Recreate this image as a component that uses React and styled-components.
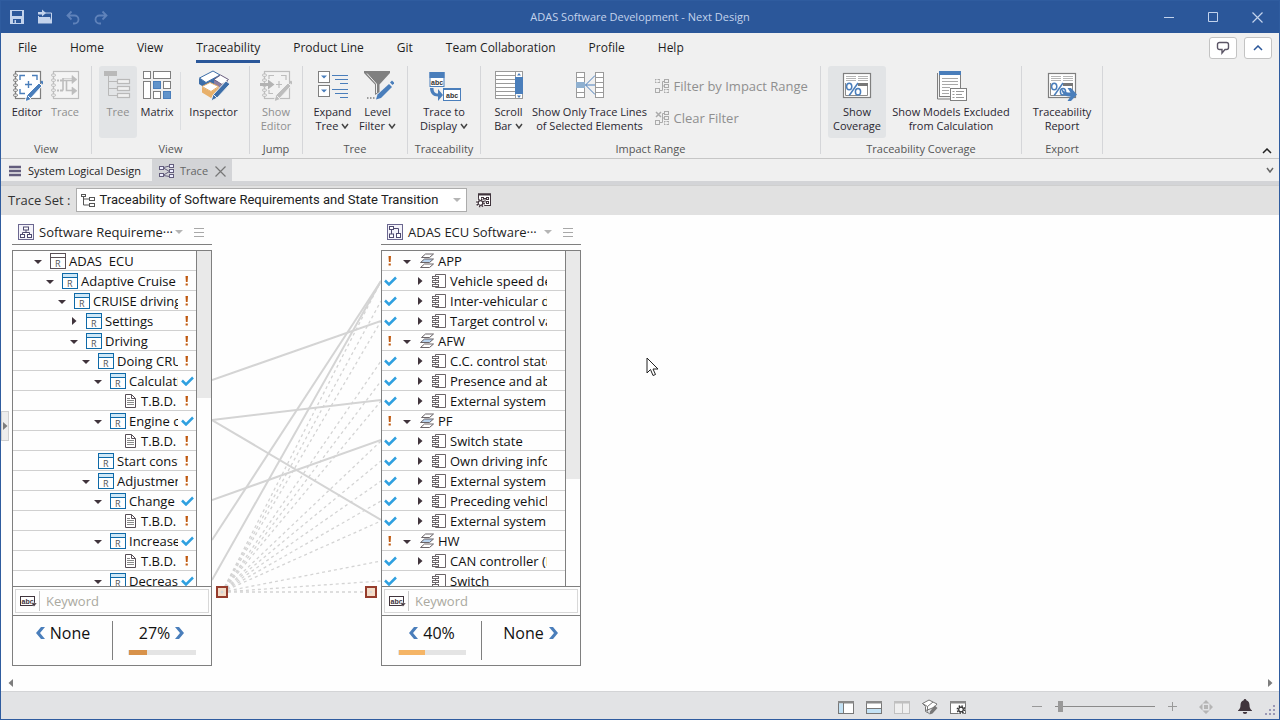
import React from "react";
import styled, { createGlobalStyle, css } from "styled-components";

const ui = '"Open Sans", "Noto Sans", sans-serif';
const blue = "#4a7ebb";
const grey = "#7f7f7f";
const pale = "#bdbdbd";

const GlobalStyle = createGlobalStyle`
  *, *::before, *::after { box-sizing: border-box; }
  body { margin: 0; font-family: ${ui}; font-size: 13px; color: #1e1e1e; }
  button, input, select { font: inherit; color: inherit; margin: 0; padding: 0; border: 0; background: none; border-radius: 0; }
  svg { display: block; flex: none; }
`;

/* ---------- window frame ---------- */

const Window = styled.div`
  display: flex;
  flex-direction: column;
  height: 100vh;
  min-height: 560px;
  border: 1px solid #2f5c9f;
  background: #fff;
  overflow: hidden;
  position: relative;
`;

const TitleBar = styled.header`
  display: grid;
  grid-template-columns: 1fr auto 1fr;
  align-items: center;
  height: 32px;
  flex: none;
  background: #2b579a;
  color: #c3d3ec;
  font-size: 11px;
`;

const QuickAccess = styled.div`
  display: flex;
  gap: 12px;
  padding-left: 8px;
`;

const QuickButton = styled.button`
  width: 16px;
  height: 16px;
  color: ${(p) => (p.disabled ? "#5f82ba" : "#c3d3ec")};
`;

const Title = styled.h1`
  margin: 0;
  font-size: 11px;
  font-weight: 400;
  line-height: 16px;
`;

const WindowButtons = styled.div`
  display: flex;
  justify-content: flex-end;
`;

const WindowButton = styled.button`
  width: 44px;
  height: 32px;
  display: flex;
  align-items: center;
  justify-content: center;
`;

/* ---------- menu ---------- */

const MenuBar = styled.nav`
  display: flex;
  flex: none;
  height: 30px;
  padding: 0 7px 0 17px;
  background: #f0f0f0;
`;

const MenuList = styled.div`
  display: flex;
  gap: 33px;
  flex: 1;
`;

const MenuItem = styled.button`
  font-size: 12px;
  line-height: 24px;
  height: 30px;
  padding-top: 2px;
  border-bottom: 3px solid ${(p) => (p.$active ? "#2b579a" : "transparent")};
  white-space: nowrap;
`;

const MenuTools = styled.div`
  display: flex;
  gap: 7px;
  padding-top: 4px;
`;

const MenuTool = styled.button`
  width: 28px;
  height: 22px;
  display: flex;
  align-items: center;
  justify-content: center;
  background: #fff;
  border: 1px solid #c3c3c3;
  border-radius: 3px;
`;

/* ---------- ribbon ---------- */

const Ribbon = styled.section`
  display: flex;
  flex: none;
  height: 96px;
  padding: 3px 0 4px;
  background: #f0f0f0;
  border-bottom: 1px solid #c6c6c6;
`;

const Group = styled.div`
  width: ${(p) => p.$w}px;
  flex: none;
  display: flex;
  flex-direction: column;
  border-right: 1px solid #d5d6d9;
`;

const GroupItems = styled.div`
  display: flex;
  justify-content: center;
  gap: ${(p) => p.$gap || 0}px;
  flex: 1;
`;

const GroupLabel = styled.div`
  text-align: center;
  font-size: 11px;
  line-height: 10px;
  color: #555;
`;

const RibbonButton = styled.button`
  width: ${(p) => p.$w}px;
  height: 72px;
  display: flex;
  flex-direction: column;
  align-items: center;
  gap: 3px;
  padding-top: 4px;
  border-radius: 3px;
  font-size: 11px;
  line-height: 14px;
  white-space: nowrap;
  color: ${(p) => (p.$dim ? "#8f8f8f" : "#2a2730")};
  background: ${(p) => (p.$on ? "#e2e4e6" : "transparent")};
`;

const Line = styled.span`
  display: flex;
  align-items: center;
  justify-content: center;
  gap: 3px;
  height: 14px;
`;

const RibbonDivider = styled.span`
  width: 1px;
  height: 58px;
  margin: 6px 4px 0 3px;
  background: #dcdee1;
`;

const CommandList = styled.div`
  display: flex;
  flex-direction: column;
  gap: 12px;
  padding-top: 10px;
`;

const Command = styled.button`
  display: flex;
  align-items: center;
  gap: 5px;
  height: 20px;
  width: 154px;
  font-size: 13px;
  line-height: 20px;
  color: #8f8f8f;
  white-space: nowrap;
`;

const RibbonEnd = styled.div`
  flex: 1;
  display: flex;
  justify-content: flex-end;
  align-items: flex-end;
  padding-right: 7px;
`;

const PlainButton = styled.button`
  display: flex;
  align-items: center;
  justify-content: center;
`;

/* ---------- document tabs and tool row ---------- */

const Tabs = styled.div`
  display: flex;
  flex: none;
  height: 26px;
  background: #f0f0f0;
  border-bottom: 4px solid #d3d4d7;
`;

const Tab = styled.div`
  display: flex;
  align-items: center;
  gap: 7px;
  padding: 2px ${(p) => (p.$active ? 6 : 11)}px 0 7px;
  font-size: 11px;
  background: ${(p) => (p.$active ? "#d3d4d7" : "transparent")};
  color: ${(p) => (p.$active ? "#666" : "#222")};
`;

const TabButton = styled.button`
  display: flex;
  align-items: center;
  gap: 6px;
  line-height: 20px;
`;

const TabsEnd = styled.div`
  margin-left: auto;
  display: flex;
  padding-right: 5px;
`;

const ToolRow = styled.div`
  display: flex;
  align-items: center;
  flex: none;
  height: 30px;
  padding: 0 7px 1px;
  gap: 6px;
  background: #e1e1e1;
  border-top: 1px solid #cfcfcf;
  color: #333;
`;

const SelectBox = styled.div`
  display: flex;
  align-items: center;
  width: 391px;
  height: 24px;
  padding: 0 5px 0 4px;
  gap: 4px;
  background: #fff;
  border: 1px solid #acacac;
`;

const TraceSelect = styled.select`
  appearance: none;
  flex: 1;
  min-width: 0;
  height: 22px;
  font-family: Roboto, ${ui};
  line-height: 22px;
  color: #222;
  outline: none;
`;

const ToolButton = styled.button`
  margin-left: 3px;
`;

/* ---------- work area ---------- */

const Work = styled.main`
  flex: 1;
  min-height: 0;
  display: flex;
  flex-direction: column;
  background: #fefefe;
`;

const Board = styled.div`
  flex: 1;
  min-height: 0;
  display: flex;
`;

const SideRail = styled.div`
  width: 11px;
  flex: none;
  display: flex;
  align-items: center;
  padding-bottom: 40px;
`;

const RailHandle = styled.button`
  width: 8px;
  height: 30px;
  display: flex;
  align-items: center;
  justify-content: center;
  background: #ededed;
  border: 1px solid #cfcfcf;
`;

const Column = styled.section`
  width: 200px;
  flex: none;
  display: flex;
  flex-direction: column;
  padding-top: 3px;
  padding-bottom: 10px;
`;

const ColumnHead = styled.div`
  display: flex;
  align-items: center;
  height: 27px;
  padding: 2px 8px 0 6px;
  margin-bottom: 5px;
  border-bottom: 1px solid ${grey};
`;

const ColumnTitle = styled.h2`
  flex: 1;
  margin: 0 0 0 5px;
  font-size: 13px;
  font-weight: 400;
  line-height: 24px;
  white-space: nowrap;
`;

const HeadTools = styled.div`
  display: flex;
  gap: 11px;
`;

const Panel = styled.div`
  flex: 1;
  min-height: 0;
  display: flex;
  flex-direction: column;
  border: 1px solid ${grey};
`;

const ListArea = styled.div`
  flex: 1;
  min-height: 0;
  display: flex;
  overflow: hidden;
`;

const Rows = styled.ul`
  flex: 1;
  min-width: 0;
  margin: 0;
  padding: 0;
  list-style: none;
  overflow: hidden;
`;

const Row = styled.li`
  display: flex;
  align-items: center;
  height: 20px;
  padding-top: 1px;
  border-bottom: 1px solid #d0d0d0;
`;

const Mark = styled.span`
  width: ${(p) => (p.$first ? 17 : 18)}px;
  flex: none;
  display: flex;
  justify-content: center;
`;

const Cell = styled.span`
  flex: 1;
  min-width: 0;
  display: flex;
  align-items: center;
  overflow: hidden;
  padding-left: ${(p) => p.$indent}px;
`;

const Twist = styled.span`
  width: 16px;
  flex: none;
  display: flex;
  justify-content: center;
  margin-right: 4px;
`;

const RowText = styled.span`
  margin-left: 3px;
  line-height: 18px;
  white-space: pre;
  color: #111;
`;

const ScrollTrack = styled.div`
  width: 15px;
  flex: none;
  border-left: 1px solid ${grey};
`;

const ScrollThumb = styled.div`
  height: ${(p) => p.$size}%;
  background: #e9e9e9;
`;

const FilterRow = styled.div`
  flex: none;
  height: 29px;
  padding: 2px;
  border-top: 1px solid ${grey};
`;

const FilterBox = styled.label`
  display: flex;
  align-items: center;
  height: 24px;
  border: 1px solid #d8d8d8;
`;

const FilterMode = styled.span`
  display: flex;
  align-items: center;
  width: 24px;
  height: 20px;
  padding-left: 4px;
  border-right: 1px solid #c8c8c8;
`;

const FilterInput = styled.input`
  flex: 1;
  min-width: 0;
  height: 22px;
  padding-left: 6px;
  outline: none;
  &::placeholder { color: #aaa9a0; opacity: 1; }
`;

const Stats = styled.div`
  flex: none;
  height: 50px;
  padding: 5px 0;
  display: grid;
  grid-template-columns: 100px 1fr;
  border-top: 1px solid ${grey};
`;

const Stat = styled.div`
  display: flex;
  flex-direction: column;
  align-items: center;
  ${(p) => p.$divided && css`border-right: 1px solid ${grey};`}
`;

const StatButton = styled.button`
  display: flex;
  align-items: center;
  gap: 5px;
  height: 24px;
  font-size: 16px;
  line-height: 24px;
  color: #111;
`;

const Meter = styled.div`
  width: 68px;
  height: 5px;
  margin-top: 5px;
  padding-left: 1px;
  background: #e4e4e4;
`;

const MeterFill = styled.div`
  height: 5px;
  background: ${(p) => p.$color};
`;

const LinkArea = styled.div`
  width: 169px;
  flex: none;
`;

const HScroll = styled.div`
  flex: none;
  display: flex;
  justify-content: space-between;
  align-items: center;
  height: 15px;
  padding: 0 6px 1px 7px;
`;

const Pointer = styled.div`
  position: absolute;
  left: 645px;
  top: 356px;
`;

/* ---------- status bar ---------- */

const StatusBar = styled.footer`
  flex: none;
  display: flex;
  align-items: center;
  justify-content: flex-end;
  height: 28px;
  padding: 2px 3px 0 0;
  background: #e2e3e5;
  border-top: 1px solid #d3d4d6;
`;

const ViewButtons = styled.div`
  display: flex;
  gap: 12px;
`;

const Zoom = styled.div`
  display: flex;
  align-items: center;
  gap: 13px;
  margin: 0 21px 0 66px;
`;

const ZoomSlider = styled.input`
  appearance: none;
  width: 100px;
  height: 12px;
  &::-webkit-slider-runnable-track {
    height: 11px;
    background: linear-gradient(#8a8a8a, #8a8a8a) center / 100% 1px no-repeat;
  }
  &::-webkit-slider-thumb {
    appearance: none;
    width: 5px;
    height: 11px;
    background: #999;
  }
`;

const StatusTools = styled.div`
  display: flex;
  align-items: center;
  gap: 24px;
`;

const Grip = styled.div`
  margin-left: 13px;
  align-self: flex-end;
  padding-bottom: 3px;
`;

/* ---------- icons ---------- */

const Svg = ({ w = 32, h = w, children, ...rest }) => (
  <svg width={w} height={h} viewBox={`0 0 ${w} ${h}`} fill="none" aria-hidden="true" {...rest}>
    {children}
  </svg>
);

const Pencil = ({ color, edge = "#f0f0f0" }) => (
  <g>
    <path d="M28 13l3 3L20 28l-6 3 2-6z" fill={color} stroke={edge} strokeWidth="1" />
    <path d="M15 31l1.500-5 3 3z" fill={color} />
    <path d="M29 12l2-1.500 2 2-1.500 2z" fill={color} />
    <path d="M17 26l3 3" stroke={edge} strokeWidth="1" />
  </g>
);

const Notebook = ({ color, fill }) => (
  <g stroke={color} fill={fill}>
    <rect x="4.500" y="1.500" width="25" height="27" strokeWidth="1.200" />
    {[4, 9, 14, 19, 24].map((y) => (
      <g key={y}>
        <rect x="2.500" y={y} width="4" height="2.400" rx="1.200" strokeWidth="1" fill="#f0f0f0" />
      </g>
    ))}
  </g>
);

const EditorIcon = () => (
  <Svg>
    <Notebook color={grey} fill="#fff" />
    <path d="M9 10V5.500h5M21 5.500h5V10M9 19v4.500h5M17.500 11v7M14 14.500h7" stroke={blue} strokeWidth="1.400" />
    <Pencil color={blue} edge="#fff" />
  </Svg>
);

const TraceIcon = () => (
  <Svg>
    <Notebook color={pale} fill="#f4f4f4" />
    <path d="M8 10.500h2M11 10.500h2M8 20.500h2M11 20.500h3" stroke={pale} strokeWidth="2" />
    <path d="M13 10.500h4.500v10H25M14 20.500V8M17 10.500h8" stroke={pale} strokeWidth="1.600" />
    <path d="M14 8.500h9M23 5.500l5 4-5 4zM23 17l5 3.800-5 4z" fill={pale} stroke={pale} strokeWidth=".6" />
  </Svg>
);

const TreeIcon = () => (
  <Svg>
    <rect x="2" y="1" width="13" height="5" fill="#b9b9b9" />
    <path d="M6.500 6v19.500M6.500 11.500h9M6.500 18.500h9M6.500 25.500h9" stroke="#b9b9b9" />
    <g stroke="#b9b9b9" fill="#f0f0f0" strokeWidth="1.200">
      <rect x="15.500" y="9.500" width="12" height="4" />
      <rect x="15.500" y="16.500" width="12" height="4" />
      <rect x="15.500" y="23.500" width="12" height="4" />
    </g>
  </Svg>
);

const MatrixIcon = () => (
  <Svg>
    <g stroke={grey} fill="#fff">
      <rect x="2.500" y="1.500" width="7" height="7" />
      <rect x="12.500" y="1.500" width="17" height="7" />
      <rect x="2.500" y="11.500" width="7" height="17" />
      <rect x="22.500" y="11.500" width="7" height="7" />
      <rect x="12.500" y="21.500" width="7" height="7" />
    </g>
    <g stroke={blue} fill="#6294cb">
      <rect x="12.500" y="11.500" width="7" height="7" />
      <rect x="22.500" y="21.500" width="7" height="7" />
    </g>
  </Svg>
);

const InspectorIcon = () => (
  <Svg>
    <path d="M1 8l7 4.500v6L1 14zM8 12.500L22 5v6L8 18.500z" fill="#3d6ea8" />
    <path d="M1.500 8L15 1l7 4L8 12.500z" fill="#fff" stroke="#3d6ea8" />
    <path d="M16 10l8 4.500V19l-8-4zM24 14.500l6-4.500v4l-6 5z" fill="#8d7fa0" />
    <path d="M16 9.500L22.500 5l8 4.500-6.500 5z" fill="#fff" stroke="#6b5f80" />
    <path d="M4 17l9 4.500V28l-9-5.500zM13 21.500L21 17v5l-8 6z" fill="#e8b06a" />
    <path d="M4 16.500l8-4 8.500 4-7.500 5z" fill="#fff" stroke="#e8b06a" />
    <path d="M28 11l4 3-13 14-6 3 2-6z" fill="#3d6ea8" stroke="#f0f0f0" />
    <path d="M16 25l3.500 3.500" stroke="#f0f0f0" />
  </Svg>
);

const ShowEditorIcon = () => (
  <Svg>
    <Notebook color={pale} fill="#f2f2f2" />
    <path d="M9 9V5.500h5M21 5.500h5V10M9 20v3.500h4M19 11v7M16 14.500h6" stroke={pale} strokeWidth="1.200" />
    <path d="M0 13h8V9.500l6.500 5L8 19.500V16H0z" fill="#b3b3b3" />
    <Pencil color={pale} edge="#f0f0f0" />
  </Svg>
);

const ExpandTreeIcon = () => (
  <Svg>
    <g stroke={grey} fill="#fff">
      <rect x="1.500" y="1.500" width="11" height="11" />
      <rect x="1.500" y="15.500" width="11" height="11" />
    </g>
    <path d="M4 5.500h6l-3 3zM4 19.500h6l-3 3z" fill={blue} />
    <path d="M15 5.500h16M18 9.500h13M23 13.500h8M15 19.500h16M18 23.500h13M23 27.500h8" stroke={blue} />
  </Svg>
);

const FilterIcon = () => (
  <Svg>
    <path d="M2 1h26v2L17.500 14.500V22L13 25V14.500L2 3z" fill="#808080" />
    <path d="M5 3.500l9.500 10.500v9" stroke="#f0f0f0" />
    <path d="M5 28h1.500M8 28h1.500M11 28h1.500" stroke="#808080" strokeWidth="1.500" />
    <path d="M27 14l3 3-11 11-5 1.500 1.500-5z" fill={blue} />
    <path d="M28 12.500l2-2 2.500 2.500-2 2z" fill={blue} />
  </Svg>
);

const TraceToIcon = () => (
  <Svg w={34} h={32}>
    <rect x="3" y="2.500" width="14" height="14" fill="#fff" stroke={blue} />
    <rect x="2.500" y="2" width="15" height="6" fill={blue} />
    <rect x="16.500" y="18.500" width="17" height="12" fill="#fff" stroke={blue} />
    <rect x="16" y="18" width="18" height="2" fill={blue} />
    <text x="4" y="14.500" fontSize="7" fontWeight="700" fill="#333" fontFamily="Liberation Sans, sans-serif">abc</text>
    <text x="19" y="27.500" fontSize="7" fontWeight="700" fill="#333" fontFamily="Liberation Sans, sans-serif">abc</text>
    <path d="M3 18h3.500c0 4 1.500 5.500 4.500 5.500V19l5 6-5 6v-4.500C6 26.500 3 23 3 18z" fill={blue} />
  </Svg>
);

const ScrollBarIcon = () => (
  <Svg>
    <rect x="2.500" y="1.500" width="27" height="27" fill="#fff" stroke="#9a9a9a" />
    <path d="M2 5.500h20M2 9.500h20M2 13.500h20M2 17.500h20M2 21.500h20M2 25.500h20M22.500 1v28" stroke="#9a9a9a" />
    <rect x="22" y="7" width="8" height="17" fill={blue} />
    <path d="M24 5.500l2-2.500 2 2.500zM24 25.500l2 2.500 2-2.500z" fill={blue} />
  </Svg>
);

const TraceLinesIcon = () => (
  <Svg>
    <g stroke="#9a9a9a" fill="#fff">
      <rect x="2.500" y="2.500" width="8" height="25" />
      <rect x="21.500" y="2.500" width="8" height="25" />
      <path d="M2 7.500h8M2 22.500h8M21 7.500h8M21 12.500h8M21 17.500h8M21 22.500h8" />
    </g>
    <rect x="2" y="12" width="9" height="6" fill="#8fb0d0" />
    <path d="M21 5.500L11.500 15 21 24.500M11.500 15H21" stroke={blue} />
  </Svg>
);

const RangeIcon = ({ crossed }) => (
  <Svg w={14}>
    <g stroke="#ababab">
      {crossed ? (
        <path d="M1 1l5 5M6 1L1 6" strokeWidth="1.500" />
      ) : (
        <path d="M0 .5h5M0 3.500h5M.5 0v5M4.500 0v5" strokeDasharray="1.500 1" />
      )}
      <rect x=".5" y="9.500" width="4" height="4" />
      <path d="M5 11.500h2.500v-9H9M7.500 7H9" />
      <rect x="9.500" y=".5" width="4" height="3" />
      <rect x="9.500" y="5.500" width="4" height="3" />
      <path d="M9 10.500h5M9 13.500h5M9.500 10v4M13.500 10v4" strokeDasharray="1.500 1" />
    </g>
  </Svg>
);

const CoveragePage = () => (
  <g>
    <rect x="2.500" y="3.500" width="27" height="24" fill="#fff" stroke={grey} strokeWidth="1.200" />
    <path d="M5 6.500h10M17 6.500h10M5 8.500h10M17 8.500h10M5 10.500h10M17 10.500h10" stroke="#b5b5b5" />
    <path d="M4.500 13v12.500h22V14" stroke="#8c8c8c" />
    <rect x="17" y="13" width="10" height="3" fill="#777" />
    <ellipse cx="8.200" cy="16.500" rx="2.600" ry="3.300" fill="#fff" stroke={blue} strokeWidth="1.500" />
    <ellipse cx="17" cy="21.800" rx="2.600" ry="3.300" fill="#fff" stroke={blue} strokeWidth="1.500" />
    <path d="M17 13L8.200 25.500" stroke={blue} strokeWidth="1.500" />
  </g>
);

const CoverageIcon = () => (
  <Svg>
    <CoveragePage />
  </Svg>
);

const ReportIcon = () => (
  <Svg>
    <CoveragePage />
    <path d="M15.500 18c2 3.500 4 4.500 8 4.500h1l-3-4.500h3.500l6 6.500-6 6.500h-3.500l3-4.500h-1c-5 0-8-3.500-8-8.500z" fill={blue} />
  </Svg>
);

const ExcludedIcon = () => (
  <Svg>
    <path d="M2.500 3v26H15" stroke={grey} />
    <rect x="4.500" y="1.500" width="21" height="25" fill="#fff" stroke={grey} />
    <rect x="4" y="1" width="22" height="4" fill={blue} />
    <path d="M7 8.500h16M7 11.500h16M7 14.500h16M7 17.500h8M7 20.500h7M7 23.500h7" stroke="#a9a9a9" />
    <rect x="15.500" y="18.500" width="16" height="12" fill="#fff" stroke={grey} />
    <path d="M17.500 21.500h2M21 21.500h8M17.500 24.500h2M21 24.500h6M21 27.500h8M17.500 27.500h2" stroke="#999" />
  </Svg>
);

const SaveIcon = () => (
  <Svg w={16}>
    <path d="M1 1h14v14H1zM3 2v5h10V2zM4 10v4h1.500v-3H7v3h5v-4z" fill="currentColor" fillRule="evenodd" />
  </Svg>
);

const OpenIcon = () => (
  <Svg w={16}>
    <path d="M2 8h11l2 6.500H2z" fill="currentColor" />
    <path d="M1.500 14.500V7M8 4h6.500v10" stroke="currentColor" />
    <path d="M1 5.500V3h4V.5L9 4 5 7.500V5.500z" fill="currentColor" />
  </Svg>
);

const UndoIcon = ({ flip }) => (
  <Svg w={16}>
    <g transform={flip ? "translate(16 0) scale(-1 1)" : undefined} stroke="currentColor" strokeWidth="1.800">
      <path d="M6.500 2.500L2.500 6.500l4 4M3 6.500h6.500a4 4 0 0 1 0 8H8" />
    </g>
  </Svg>
);

const Chevron = ({ color = "#444", up, w = 8 }) => (
  <Svg w={w} h={6}>
    <path d={up ? `M1 5L${w / 2} 1 ${w - 1} 5` : `M1 1l${w / 2 - 1} 4 ${w / 2 - 1}-4`} stroke={color} strokeWidth="1.500" />
  </Svg>
);

const BubbleIcon = () => (
  <Svg w={14} h={14}>
    <path d="M3.500 1.500h7a2 2 0 0 1 2 2v3a2 2 0 0 1-2 2H9L6 12V8.500H3.500a2 2 0 0 1-2-2v-3a2 2 0 0 1 2-2z" stroke="#5b5566" strokeWidth="1.400" />
  </Svg>
);

const BarsIcon = () => (
  <Svg w={14} h={12}>
    <path d="M1 2h12M1 6h12M1 10h12" stroke="#635d7d" strokeWidth="2.500" />
  </Svg>
);

const TraceTabIcon = () => (
  <Svg w={15}>
    <g stroke="#635d7d">
      <path d="M4.500 3.500L10.500 2M4.500 4l6 3.500M4.500 11l6-3.500M4.500 11.500l6 1" />
      <g fill="#eef">
        <rect x=".5" y="2.500" width="4" height="3" />
        <rect x=".5" y="9.500" width="4" height="3" />
        <rect x="10.500" y=".5" width="4" height="3" />
        <rect x="10.500" y="5.500" width="4" height="3" />
        <rect x="10.500" y="10.500" width="4" height="3" />
      </g>
    </g>
  </Svg>
);

const CloseIcon = ({ size = 11, color = "#777" }) => (
  <Svg w={size}>
    <path d={`M.5.5l${size - 1} ${size - 1}M${size - 0.5}.5L.5 ${size - 0.5}`} stroke={color} strokeWidth="1.200" />
  </Svg>
);

const BranchIcon = () => (
  <Svg w={14} h={14}>
    <g stroke="#555">
      <rect x=".5" y="1.500" width="4" height="2" />
      <rect x="8.500" y="4.500" width="5" height="3" />
      <rect x="8.500" y="10.500" width="5" height="3" />
      <path d="M2.500 4v8h6M2.500 6h6" />
    </g>
  </Svg>
);

const DownArrow = ({ color = "#b5b5b5" }) => (
  <Svg w={8} h={4}>
    <path d="M0 0h8L4 4z" fill={color} />
  </Svg>
);

const Cog = ({ x, y, color, bg }) => (
  <g>
    <circle cx={x} cy={y} r="4.500" fill={bg} />
    <circle cx={x} cy={y} r="3.600" stroke={color} strokeWidth="1.600" strokeDasharray="1.500 1.330" />
    <circle cx={x} cy={y} r="2.300" stroke={color} strokeWidth="1.200" />
  </g>
);

const TraceSetIcon = () => (
  <Svg w={16}>
    <rect x="2.500" y="2" width="12" height="11.500" fill="#fff" stroke="#40343c" />
    <path d="M2 1.500h13v2H2z" fill="#40343c" />
    <g stroke="#40343c">
      <rect x="5.500" y="5.500" width="2" height="2" />
      <rect x="10.500" y="5.500" width="2" height="2" />
      <rect x="10.500" y="9.500" width="2" height="2" />
      <path d="M7.500 6.500h3M9 6.500v4" />
    </g>
    <Cog x={4.500} y={11} color="#40343c" bg="#fff" />
  </Svg>
);

const ModelIcon = ({ kind }) => (
  <Svg w={16}>
    <rect x=".5" y=".5" width="15" height="15" fill="#f4f3fa" stroke="#6b6790" />
    <g stroke="#4e4a70" fill="#fff">
      {kind === "tree" ? (
        <>
          <rect x="5.500" y="3" width="5" height="3" />
          <path d="M8 6v2.500M4.500 10.500v-2h7v2" />
          <rect x="2.500" y="10.500" width="4" height="3" />
          <rect x="9.500" y="10.500" width="4" height="3" />
        </>
      ) : (
        <>
          <path d="M4.500 6v5M7 4.500h4.500V9" fill="none" />
          <rect x="2.500" y="2.500" width="4" height="3" />
          <rect x="2.500" y="10" width="4" height="3.500" />
          <rect x="9.500" y="9.500" width="4" height="4" />
        </>
      )}
    </g>
  </Svg>
);

const ListMenuIcon = () => (
  <Svg w={10} h={9}>
    <path d="M0 .5h10M0 4.500h10M0 8.500h10" stroke="#a8a8a8" />
  </Svg>
);

const ReqIcon = ({ root }) => (
  <Svg w={16}>
    <rect x=".5" y=".5" width="15" height="15" fill="#fff" stroke={root ? "#5a5056" : "#0f6aa8"} />
    <rect x="1" y="1" width="14" height="3" fill={root ? "#fff" : "#cfe8f7"} />
    <path d="M0 4.500h16" stroke={root ? "#5a5056" : "#0f6aa8"} />
    <text x="5" y="13.500" fontSize="9" fill="#555" fontFamily="Open Sans, sans-serif">R</text>
  </Svg>
);

const DocIcon = () => (
  <Svg w={16}>
    <path d="M3.500 1.500h6l4 4v9h-10z" fill="#fff" stroke="#574e56" />
    <path d="M9.500 1.500v4h4" stroke="#574e56" />
    <path d="M5 7.500h7M5 9.500h7M5 11.500h7M5 5.500h3" stroke="#8a8a8a" />
  </Svg>
);

const LayerIcon = () => (
  <Svg w={16}>
    <g stroke="#6a6468">
      <path d="M1.500 14.500l4-3.500h9l-4 3.500z" fill="#fff" />
      <path d="M1.500 9.500l4-3.500h9l-4 3.500z" fill="#b8d3ee" />
      <path d="M2.500 4.500l4-3.500h8l-4 3.500z" fill="#fff" />
    </g>
  </Svg>
);

const ComponentIcon = () => (
  <Svg w={15} h={16}>
    <g stroke="#6a6468" fill="#fff">
      <path d="M3.500 1.500h10v13h-10z" />
      <rect x=".5" y="3.500" width="6" height="2" />
      <rect x=".5" y="7.500" width="6" height="2" />
      <rect x=".5" y="11.500" width="6" height="2" />
    </g>
  </Svg>
);

const TickIcon = () => (
  <Svg w={13} h={10}>
    <path d="M1 4.500L5 8.500 12 1.500" stroke="#2fa0e0" strokeWidth="2.500" />
  </Svg>
);

const WarnIcon = () => (
  <Svg w={13} h={10}>
    <path d="M4.500 0h2.500l-.4 6h-1.700zM4.600 7.500h2.200v2H4.600z" fill="#c05a10" />
  </Svg>
);

const TwistIcon = ({ open }) => (
  <Svg w={8} h={8}>
    <path d={open ? "M0 3h8L4 7z" : "M2 0v8l4.500-4z"} fill="#40343c" />
  </Svg>
);

const AbcIcon = () => (
  <Svg w={17} h={12}>
    <rect x=".5" y="1.500" width="14" height="9" stroke="#40343c" />
    <text x="1.500" y="8.500" fontSize="7" fontWeight="700" fill="#40343c" fontFamily="Liberation Sans, sans-serif">abc</text>
    <path d="M11 8h6l-3 3.500z" fill="#40343c" stroke="#fff" strokeWidth=".4" />
  </Svg>
);

const AngleIcon = ({ right }) => (
  <Svg w={10} h={14}>
    <path d={right ? "M0 1h4l5 6-5 6H0l5-6z" : "M10 1H6L1 7l5 6h4L5 7z"} fill={blue} />
  </Svg>
);

const SideArrow = ({ left }) => (
  <Svg w={5} h={8}>
    <path d={left ? "M5 0v8L.5 4z" : "M0 0v8l4.500-4z"} fill="#7d7d7d" />
  </Svg>
);

const PaneIcon = ({ kind }) => (
  <Svg w={16} h={14}>
    <rect x=".5" y="1.500" width="15" height="12" fill={kind === "split" ? "#efefef" : "#fff"} stroke={kind === "split" ? "#c0c0c0" : "#777"} />
    <rect x="0" y="1" width="16" height="2.500" fill={kind === "split" ? "#c0c0c0" : "#8a8a8a"} />
    {kind === "left" && (
      <>
        <rect x="1" y="3.500" width="4" height="9.500" fill="#c3e2f5" />
        <path d="M5.500 3v10" stroke="#777" />
      </>
    )}
    {kind === "bottom" && (
      <>
        <rect x="1" y="9" width="14" height="4" fill="#c3e2f5" />
        <path d="M1 8.500h14" stroke="#777" />
      </>
    )}
    {kind === "split" && <path d="M8.500 3v10" stroke="#c0c0c0" />}
    {kind === "cog" && <Cog x={11} y={9.5} color="#333" bg="#fff" />}
  </Svg>
);

const SmallInspectorIcon = () => (
  <Svg w={16} h={16}>
    <path d="M.5 4.500L7 1l4 2 4 2-2.500 3L8 10l-4.500 1.500v-4z" fill="#fff" stroke="#777" />
    <path d="M.5 4.500l5 3L11 3M5.500 7.500v5M3.500 8.500v4l4 2" stroke="#777" />
    <path d="M12.500 6.500l3 2.500-5 5.500-3 1 .5-3z" fill="#777" />
  </Svg>
);

const FitIcon = () => (
  <Svg w={16} h={16}>
    <path d="M8 1l3.500 3.500h-7zM8 15l3.500-3.500h-7zM1 8l3.500-3.500v7zM15 8l-3.500-3.500v7z" fill="#b5b5b5" />
    <rect x="6" y="6" width="4" height="4" fill="#b5b5b5" />
  </Svg>
);

const BellIcon = () => (
  <Svg w={14} h={15}>
    <path d="M7 0a1.300 1.300 0 0 1 1.300 1.300C10.500 2 11.500 4 11.500 6c0 3 .8 4 2.500 5.500V12H0v-.5C1.700 10 2.500 9 2.500 6c0-2 1-4 3.200-4.700A1.300 1.300 0 0 1 7 0zM4.800 13h4.400a2.200 2 0 0 1-4.400 0z" fill="#40343c" />
  </Svg>
);

/* ---------- ribbon helpers ---------- */

const BigButton = ({ icon, lines, menu, ...rest }) => (
  <RibbonButton {...rest}>
    {icon}
    <span>
      {lines.map((text, i) => (
        <Line key={text}>
          {text}
          {menu && i === lines.length - 1 && <Chevron />}
        </Line>
      ))}
    </span>
  </RibbonButton>
);

/* ---------- data ---------- */

const menus = ["File", "Home", "View", "Traceability", "Product Line", "Git", "Team Collaboration", "Profile", "Help"];

const requirements = [
  [0, "open", "root", "ADAS  ECU", ""],
  [1, "open", "req", "Adaptive Cruise C", "warn"],
  [2, "open", "req", "CRUISE driving", "warn"],
  [3, "shut", "req", "Settings", "warn"],
  [3, "open", "req", "Driving", "warn"],
  [4, "open", "req", "Doing CRU", "warn"],
  [5, "open", "req", "Calculati", "tick"],
  [6, "", "doc", "T.B.D.", "warn"],
  [5, "open", "req", "Engine c", "tick"],
  [6, "", "doc", "T.B.D.", "warn"],
  [4, "", "req", "Start const", "warn"],
  [4, "open", "req", "Adjustment", "warn"],
  [5, "open", "req", "Change", "tick"],
  [6, "", "doc", "T.B.D.", "warn"],
  [5, "open", "req", "Increase", "tick"],
  [6, "", "doc", "T.B.D.", "warn"],
  [5, "open", "req", "Decrease", "tick"],
];

const components = [
  [0, "open", "layer", "APP", "warn"],
  [1, "shut", "part", "Vehicle speed de", "tick"],
  [1, "shut", "part", "Inter-vehicular d", "tick"],
  [1, "shut", "part", "Target control va", "tick"],
  [0, "open", "layer", "AFW", "warn"],
  [1, "shut", "part", "C.C. control state", "tick"],
  [1, "shut", "part", "Presence and ab", "tick"],
  [1, "shut", "part", "External system", "tick"],
  [0, "open", "layer", "PF", "warn"],
  [1, "shut", "part", "Switch state", "tick"],
  [1, "shut", "part", "Own driving info", "tick"],
  [1, "shut", "part", "External system", "tick"],
  [1, "shut", "part", "Preceding vehicle", "tick"],
  [1, "shut", "part", "External system", "tick"],
  [0, "open", "layer", "HW", "warn"],
  [1, "shut", "part", "CAN controller (F", "tick"],
  [1, "", "part", "Switch", "tick"],
];

const rowIcons = {
  root: <ReqIcon root />,
  req: <ReqIcon />,
  doc: <DocIcon />,
  layer: <LayerIcon />,
  part: <ComponentIcon />,
};

const markIcons = { warn: <WarnIcon />, tick: <TickIcon /> };

const solidLinks = [[165, 106], [205, 185], [205, 305], [285, 225], [325, 66], [365, 66]];
const dashedEnds = [66, 86, 106, 146, 166, 186, 226, 246, 266, 286, 306, 346, 366, 377];

/* ---------- panels ---------- */

const TreeColumn = ({ title, kind, rows, step, markFirst, thumb, left, right }) => (
  <Column>
    <ColumnHead>
      <ModelIcon kind={kind} />
      <ColumnTitle>{title}</ColumnTitle>
      <HeadTools>
        <PlainButton aria-label="Choose model">
          <DownArrow />
        </PlainButton>
        <PlainButton aria-label="Column menu">
          <ListMenuIcon />
        </PlainButton>
      </HeadTools>
    </ColumnHead>
    <Panel>
      <ListArea>
        <Rows>
          {rows.map(([depth, twist, icon, text, mark], i) => (
            <Row key={i}>
              {markFirst && <Mark $first>{markIcons[mark]}</Mark>}
              <Cell $indent={(markFirst ? 0 : 17) + depth * step}>
                <Twist>{twist && <TwistIcon open={twist === "open"} />}</Twist>
                {rowIcons[icon]}
                <RowText>{text}</RowText>
              </Cell>
              <Mark>{!markFirst && markIcons[mark]}</Mark>
            </Row>
          ))}
        </Rows>
        <ScrollTrack>
          <ScrollThumb $size={thumb} />
        </ScrollTrack>
      </ListArea>
      <FilterRow>
        <FilterBox>
          <FilterMode>
            <AbcIcon />
          </FilterMode>
          <FilterInput type="text" placeholder="Keyword" aria-label={`Filter ${title}`} />
        </FilterBox>
      </FilterRow>
      <Stats>
        <Stat $divided>
          <StatButton>
            <AngleIcon />
            {left.text}
          </StatButton>
          {left.value && <Coverage {...left} />}
        </Stat>
        <Stat>
          <StatButton>
            {right.text}
            <AngleIcon right />
          </StatButton>
          {right.value && <Coverage {...right} />}
        </Stat>
      </Stats>
    </Panel>
  </Column>
);

const Coverage = ({ value, color }) => (
  <Meter>
    <MeterFill $color={color} style={{ width: `${value}%` }} />
  </Meter>
);

const Links = () => (
  <LinkArea>
    <Svg w={169} h={400}>
      <g stroke="#d4d4d4" strokeWidth="2">
        {solidLinks.map(([a, b]) => (
          <path key={`${a}-${b}`} d={`M0 ${a}L169 ${b}`} />
        ))}
      </g>
      <g stroke="#d4d4d4" strokeWidth="1.300" strokeDasharray="3 3">
        {dashedEnds.map((y) => (
          <path key={y} d={`M10 377L${y === 377 ? 159 : 169} ${y}`} />
        ))}
      </g>
      <g fill="#f3dcc8" stroke="#963c2c" strokeWidth="2">
        <rect x="5" y="372" width="10" height="10" />
        <rect x="154" y="372" width="10" height="10" />
      </g>
      <circle cx="10" cy="377" r="1.500" fill="#d4d4d4" />
      <circle cx="159" cy="377" r="1" fill="#d4d4d4" />
    </Svg>
  </LinkArea>
);

/* ---------- page ---------- */

export default function App() {
  return (
    <Window>
      <GlobalStyle />
      <TitleBar>
        <QuickAccess>
          <QuickButton aria-label="Save"><SaveIcon /></QuickButton>
          <QuickButton aria-label="Open"><OpenIcon /></QuickButton>
          <QuickButton aria-label="Undo" disabled><UndoIcon /></QuickButton>
          <QuickButton aria-label="Redo" disabled><UndoIcon flip /></QuickButton>
        </QuickAccess>
        <Title>ADAS Software Development - Next Design</Title>
        <WindowButtons>
          <WindowButton aria-label="Minimize">
            <Svg w={10}><path d="M0 5.500h10" stroke="#c3d3ec" /></Svg>
          </WindowButton>
          <WindowButton aria-label="Maximize">
            <Svg w={10}><path d="M.5.5h9v9h-9z" stroke="#c3d3ec" /></Svg>
          </WindowButton>
          <WindowButton aria-label="Close">
            <CloseIcon size={11} color="#c3d3ec" />
          </WindowButton>
        </WindowButtons>
      </TitleBar>

      <MenuBar>
        <MenuList>
          {menus.map((name) => (
            <MenuItem key={name} $active={name === "Traceability"}>{name}</MenuItem>
          ))}
        </MenuList>
        <MenuTools>
          <MenuTool aria-label="Comments"><BubbleIcon /></MenuTool>
          <MenuTool aria-label="Hide menu"><Chevron up w={10} color="#2b579a" /></MenuTool>
        </MenuTools>
      </MenuBar>

      <Ribbon>
        <Group $w={91}>
          <GroupItems>
            <BigButton $w={38} icon={<EditorIcon />} lines={["Editor"]} />
            <BigButton $w={38} $dim icon={<TraceIcon />} lines={["Trace"]} />
          </GroupItems>
          <GroupLabel>View</GroupLabel>
        </Group>
        <Group $w={158}>
          <GroupItems>
            <BigButton $w={38} $dim $on icon={<TreeIcon />} lines={["Tree"]} />
            <BigButton $w={40} icon={<MatrixIcon />} lines={["Matrix"]} />
            <RibbonDivider />
            <BigButton $w={57} icon={<InspectorIcon />} lines={["Inspector"]} />
          </GroupItems>
          <GroupLabel>View</GroupLabel>
        </Group>
        <Group $w={53}>
          <GroupItems>
            <BigButton $w={44} $dim icon={<ShowEditorIcon />} lines={["Show", "Editor"]} />
          </GroupItems>
          <GroupLabel>Jump</GroupLabel>
        </Group>
        <Group $w={105}>
          <GroupItems $gap={2}>
            <BigButton $w={43} menu icon={<ExpandTreeIcon />} lines={["Expand", "Tree"]} />
            <BigButton $w={43} menu icon={<FilterIcon />} lines={["Level", "Filter"]} />
          </GroupItems>
          <GroupLabel>Tree</GroupLabel>
        </Group>
        <Group $w={73}>
          <GroupItems>
            <BigButton $w={60} menu icon={<TraceToIcon />} lines={["Trace to", "Display"]} />
          </GroupItems>
          <GroupLabel>Traceability</GroupLabel>
        </Group>
        <Group $w={340}>
          <GroupItems $gap={6}>
            <BigButton $w={32} menu icon={<ScrollBarIcon />} lines={["Scroll", "Bar"]} />
            <BigButton $w={118} icon={<TraceLinesIcon />} lines={["Show Only Trace Lines", "of Selected Elements"]} />
            <CommandList>
              <Command><RangeIcon />Filter by Impact Range</Command>
              <Command><RangeIcon crossed />Clear Filter</Command>
            </CommandList>
          </GroupItems>
          <GroupLabel>Impact Range</GroupLabel>
        </Group>
        <Group $w={201}>
          <GroupItems $gap={2}>
            <BigButton $w={58} $on icon={<CoverageIcon />} lines={["Show", "Coverage"]} />
            <BigButton $w={126} icon={<ExcludedIcon />} lines={["Show Models Excluded", "from Calculation"]} />
          </GroupItems>
          <GroupLabel>Traceability Coverage</GroupLabel>
        </Group>
        <Group $w={81}>
          <GroupItems>
            <BigButton $w={66} icon={<ReportIcon />} lines={["Traceability", "Report"]} />
          </GroupItems>
          <GroupLabel>Export</GroupLabel>
        </Group>
        <RibbonEnd>
          <PlainButton aria-label="Collapse ribbon"><Chevron up w={10} color="#222" /></PlainButton>
        </RibbonEnd>
      </Ribbon>

      <Tabs>
        <Tab>
          <TabButton><BarsIcon />System Logical Design</TabButton>
        </Tab>
        <Tab $active>
          <TabButton><TraceTabIcon />Trace</TabButton>
          <PlainButton aria-label="Close tab"><CloseIcon size={11} /></PlainButton>
        </Tab>
        <TabsEnd>
          <PlainButton aria-label="More tabs"><Chevron color="#666" /></PlainButton>
        </TabsEnd>
      </Tabs>

      <ToolRow>
        <label htmlFor="trace-set">Trace Set :</label>
        <SelectBox>
          <BranchIcon />
          <TraceSelect id="trace-set">
            <option>Traceability of Software Requirements and State Transition</option>
          </TraceSelect>
          <DownArrow />
        </SelectBox>
        <ToolButton aria-label="Trace set settings"><TraceSetIcon /></ToolButton>
      </ToolRow>

      <Work>
        <Board>
          <SideRail>
            <RailHandle aria-label="Show side panel"><SideArrow /></RailHandle>
          </SideRail>
          <TreeColumn
            title="Software Requireme···"
            kind="tree"
            rows={requirements}
            step={12}
            thumb={44}
            left={{ text: "None" }}
            right={{ text: "27%", value: 27, color: "#d8924a" }}
          />
          <Links />
          <TreeColumn
            title="ADAS ECU Software···"
            kind="flow"
            rows={components}
            step={13}
            markFirst
            thumb={68}
            left={{ text: "40%", value: 40, color: "#f5b566" }}
            right={{ text: "None" }}
          />
        </Board>
        <HScroll>
          <SideArrow left />
          <SideArrow />
        </HScroll>
      </Work>

      <StatusBar>
        <ViewButtons>
          <PlainButton aria-label="Left pane"><PaneIcon kind="left" /></PlainButton>
          <PlainButton aria-label="Bottom pane"><PaneIcon kind="bottom" /></PlainButton>
          <PlainButton aria-label="Split pane"><PaneIcon kind="split" /></PlainButton>
          <PlainButton aria-label="Inspector"><SmallInspectorIcon /></PlainButton>
          <PlainButton aria-label="View settings"><PaneIcon kind="cog" /></PlainButton>
        </ViewButtons>
        <Zoom>
          <PlainButton aria-label="Zoom out"><Svg w={10}><path d="M0 4.500h10" stroke="#999" /></Svg></PlainButton>
          <ZoomSlider type="range" min="0" max="100" defaultValue="3" aria-label="Zoom" />
          <PlainButton aria-label="Zoom in"><Svg w={9}><path d="M0 4.500h9M4.500 0v9" stroke="#999" /></Svg></PlainButton>
        </Zoom>
        <StatusTools>
          <PlainButton aria-label="Fit to window"><FitIcon /></PlainButton>
          <PlainButton aria-label="Notifications"><BellIcon /></PlainButton>
        </StatusTools>
        <Grip>
          <Svg w={11}>
            <path d="M8 0h2v2H8zM4 4h2v2H4zM8 4h2v2H8zM0 8h2v2H0zM4 8h2v2H4zM8 8h2v2H8z" fill="#9a98b5" />
          </Svg>
        </Grip>
      </StatusBar>

      <Pointer>
        <Svg w={14} h={20}>
          <path d="M1 1v15l3.500-3.500 2.500 6 2.500-1-2.500-5.500H12z" fill="#fff" stroke="#222" />
        </Svg>
      </Pointer>
    </Window>
  );
}
